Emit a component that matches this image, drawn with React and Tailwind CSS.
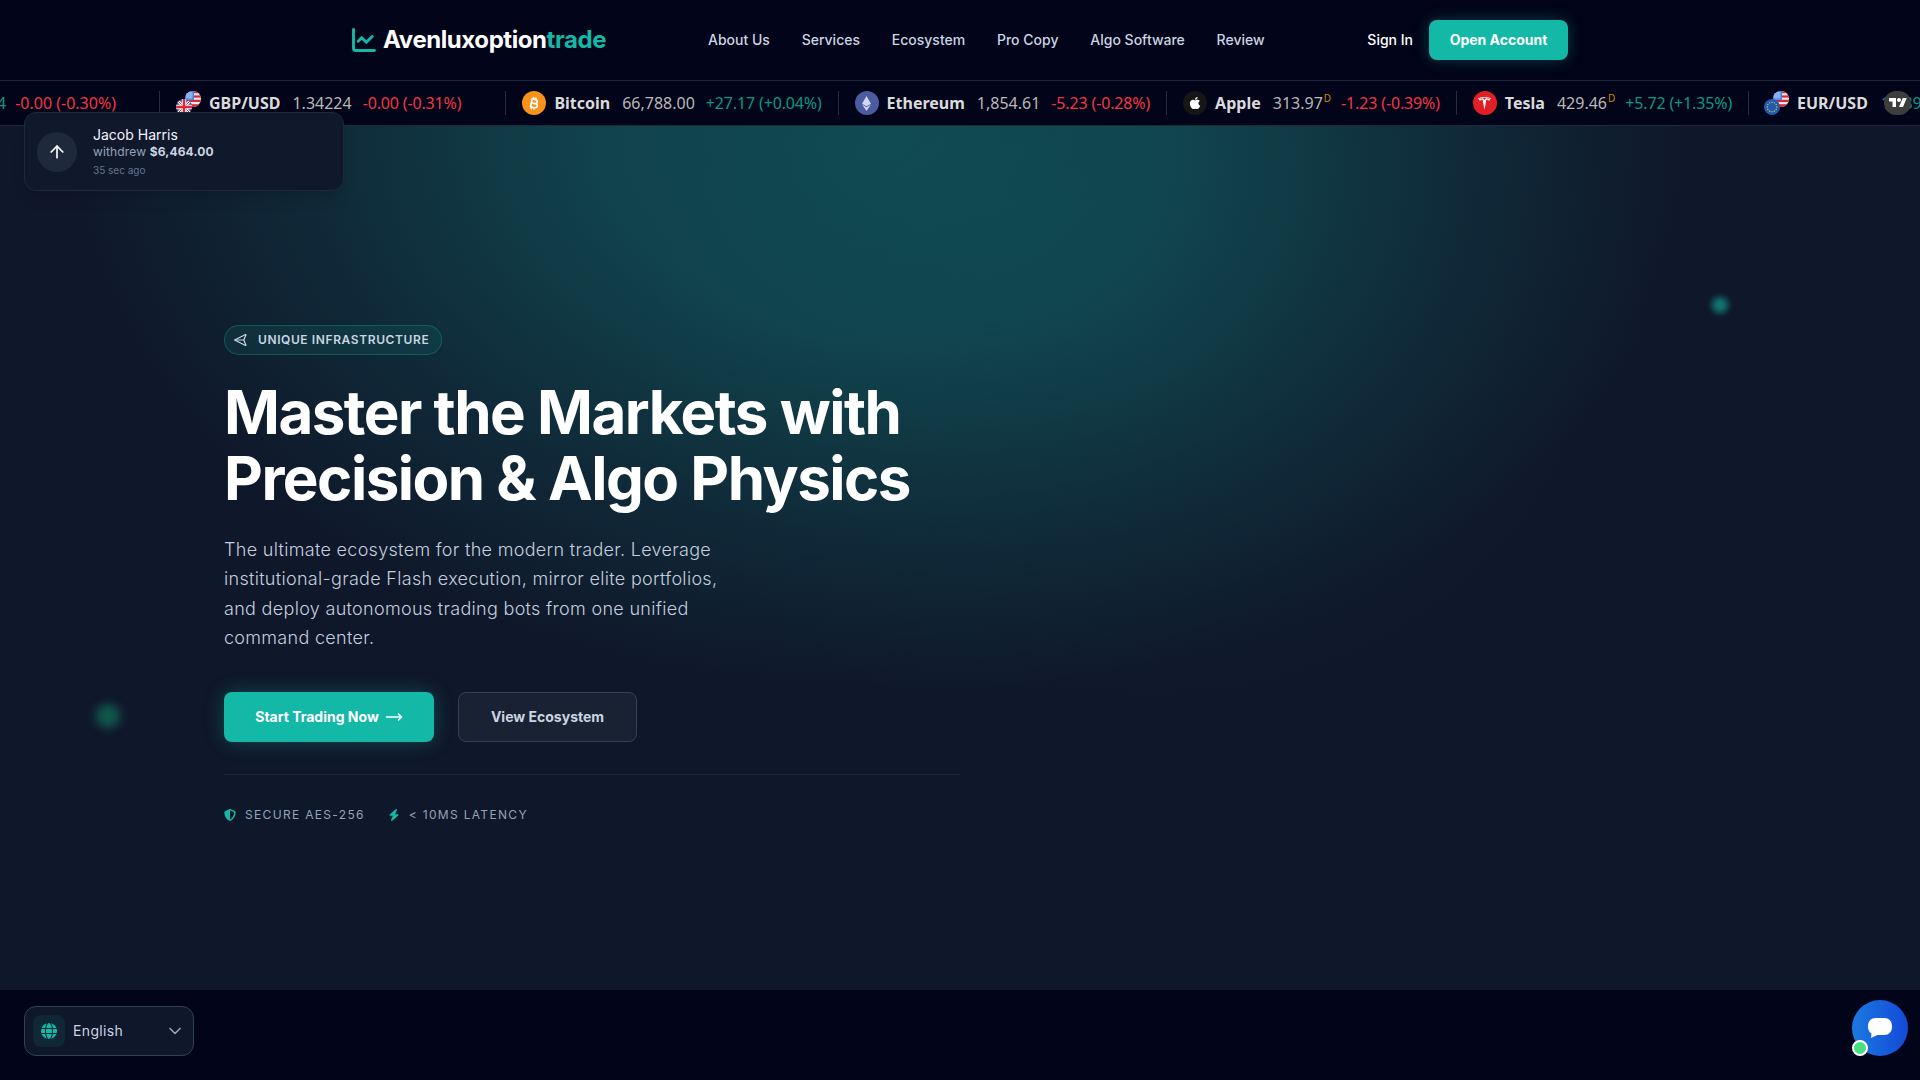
import React from "react";
import { ChartLine, ArrowUp, ChevronDown, MoveRight, Send } from "lucide-react";
import { FaShieldHalved, FaBolt, FaGlobe, FaApple, FaEthereum, FaBitcoinSign } from "react-icons/fa6";
import { SiTesla } from "react-icons/si";

const Sep = () => <div className="w-px h-6 bg-[#2a2e39] shrink-0" />;

const Green = "text-[#089981]";
const Red = "text-[#f23645]";

function UsFlag() {
  return (
    <svg viewBox="0 0 16 16" className="absolute right-0 top-0 w-4 h-4">
      <clipPath id="usc"><circle cx="8" cy="8" r="8" /></clipPath>
      <g clipPath="url(#usc)">
        <rect width="16" height="16" fill="#e8e8e8" />
        <rect y="0" width="16" height="2.2" fill="#d8283a" />
        <rect y="4.4" width="16" height="2.2" fill="#d8283a" />
        <rect y="8.8" width="16" height="2.2" fill="#d8283a" />
        <rect y="13.2" width="16" height="2.8" fill="#d8283a" />
        <rect width="9" height="8.8" fill="#3b82e6" />
        <path d="M1 2h7M1 4h7M1 6h7M2 1v7M4 1v7M6 1v7" stroke="#cfe2ff" strokeWidth=".6" />
      </g>
    </svg>
  );
}

function GbFlag() {
  return (
    <svg viewBox="0 0 16 16" className="absolute left-0 bottom-0 w-4 h-4">
      <clipPath id="gbc"><circle cx="8" cy="8" r="8" /></clipPath>
      <g clipPath="url(#gbc)">
        <rect width="16" height="16" fill="#2f4a9a" />
        <path d="M0 0L16 16M16 0L0 16" stroke="#f2f2f2" strokeWidth="3" />
        <path d="M0 0L16 16M16 0L0 16" stroke="#d8283a" strokeWidth="1" />
        <path d="M8 0V16M0 8H16" stroke="#f2f2f2" strokeWidth="4.5" />
        <path d="M8 0V16M0 8H16" stroke="#d8283a" strokeWidth="2.4" />
      </g>
    </svg>
  );
}

function EuFlag() {
  const stars = [0, 1, 2, 3, 4, 5, 6, 7, 8, 9, 10, 11];
  return (
    <svg viewBox="0 0 16 16" className="absolute left-0 bottom-0 w-4 h-4">
      <circle cx="8" cy="8" r="8" fill="#1f5bb5" />
      {stars.map((i) => (
        <circle
          key={i}
          cx={8 + 4.8 * Math.cos((i * Math.PI) / 6)}
          cy={8 + 4.8 * Math.sin((i * Math.PI) / 6)}
          r=".7"
          fill="#f5c518"
        />
      ))}
    </svg>
  );
}

const Pair = ({ low }) => (
  <div className="relative w-[25px] h-6 shrink-0">
    <UsFlag />
    {low}
  </div>
);

const Round = ({ bg, children }) => (
  <div className={`w-6 h-6 rounded-full flex items-center justify-center shrink-0 ${bg}`}>{children}</div>
);

function Item({ icon, name, price, d, change, up, fx }) {
  return (
    <>
      <div className={`flex items-center shrink-0 pl-4 ${fx ? "pr-[44px]" : "pr-4"}`}>
        {icon}
        <span className="ml-2 font-bold text-[#dbdbdb]">{name}</span>
        <span className="ml-[12px] text-[#b8b8b8] flex items-start">
          {price}
          {d && <span className="text-[10px] leading-[14px] text-[#d1850f] ml-[1px]">D</span>}
        </span>
        <span className={`tracking-[-0.15px] ${d ? "ml-[10px]" : "ml-[11px]"} ${up ? Green : Red}`}>{change}</span>
      </div>
      <Sep />
    </>
  );
}

function Ticker() {
  return (
    <div className="relative h-[45px] bg-[#020419] border-b border-[#1e293b] overflow-hidden">
      <div className="flex items-center h-[44px] -ml-[8px] font-['Noto_Sans',sans-serif] text-base whitespace-nowrap">
        <div className="shrink-0 w-[167px] flex items-center justify-end pr-[43px]">
          <span className="text-[#089981] mr-[9px]">4</span>
          <span className={Red}>-0.00 (-0.30%)</span>
        </div>
        <Sep />
        <Item fx icon={<Pair low={<GbFlag />} />} name="GBP/USD" price="1.34224" change="-0.00 (-0.31%)" />
        <Item
          icon={<Round bg="bg-[#f7931a]"><FaBitcoinSign className="w-[13px] h-[13px] text-white rotate-12" /></Round>}
          name="Bitcoin"
          price="66,788.00"
          change="+27.17 (+0.04%)"
          up
        />
        <Item
          icon={<Round bg="bg-[#4c5ba0]"><FaEthereum className="w-[15px] h-[15px] text-[#cfd8f5]" /></Round>}
          name="Ethereum"
          price="1,854.61"
          change="-5.23 (-0.28%)"
        />
        <Item
          icon={<Round bg="bg-[#161616]"><FaApple className="w-[14px] h-[14px] text-white" /></Round>}
          name="Apple"
          price="313.97"
          d
          change="-1.23 (-0.39%)"
        />
        <Item
          icon={<Round bg="bg-[#e31f26]"><SiTesla className="w-[13px] h-[13px] text-white" /></Round>}
          name="Tesla"
          price="429.46"
          d
          change="+5.72 (+1.35%)"
          up
        />
        <div className="flex items-center shrink-0 pl-[15px] pr-4">
          <Pair low={<EuFlag />} />
          <span className="ml-2 font-bold text-[#dbdbdb]">EUR/USD</span>
          <span className="ml-[13px] text-[#089981]">1.1894</span>
        </div>
      </div>
      <div className="absolute left-[1884px] top-[10px] w-[27px] h-6 rounded-full bg-[#3d3d3d] flex items-center justify-center">
        <svg viewBox="0 0 36 28" className="w-[18px] h-[14px]" fill="#fff">
          <path d="M14 22H7V11H0V4h14v18zM28 22h-8l7.500-18h8L28 22z" />
          <circle cx="20" cy="8" r="4" />
        </svg>
      </div>
    </div>
  );
}

function Nav() {
  const links = ["About Us", "Services", "Ecosystem", "Pro Copy", "Algo Software", "Review"];
  return (
    <nav className="h-[81px] bg-[#020419] border-b border-[#1e293b]">
      <div className="mx-auto w-[1280px] pl-[30px] pr-8 h-[80px] flex items-center">
        <div className="flex items-center gap-[5px] w-[358px]">
          <ChartLine className="w-7 h-7 text-[#14b8a6]" strokeWidth={2.5} />
          <span className="text-2xl font-bold tracking-[-0.018em] text-white">
            Avenluxoption<span className="text-[#14b8a6]">trade</span>
          </span>
        </div>
        <div className="flex items-center gap-[31.8px] text-sm font-medium text-[#cbd5e1]">
          {links.map((l) => (
            <span key={l}>{l}</span>
          ))}
        </div>
        <div className="ml-auto flex items-center gap-4">
          <span className="text-sm font-medium text-white">Sign In</span>
          <button className="h-10 w-[139px] rounded-lg bg-[#14b8a6] text-sm font-bold text-white shadow-[0_0_15px_rgba(20,184,166,0.3)]">
            Open Account
          </button>
        </div>
      </div>
    </nav>
  );
}

function Hero() {
  return (
    <section className="relative h-[864px] bg-[#0f172a] overflow-hidden">
      <div className="absolute inset-0 bg-[radial-gradient(ellipse_520px_420px_at_1150px_220px,rgba(20,184,166,0.05),rgba(20,184,166,0)_100%),radial-gradient(ellipse_820px_560px_at_880px_10px,rgba(20,184,166,0.31)_0%,rgba(20,184,166,0.27)_35%,rgba(20,184,166,0.11)_70%,rgba(20,184,166,0)_100%)]" />
      <div className="absolute left-[1712px] top-[171px] w-4 h-4 rounded-full bg-[#14b8a6] opacity-60 blur-[3px]" />
      <div className="absolute left-[96px] top-[578px] w-6 h-6 rounded-full bg-[#10b981] opacity-40 blur-[5px]" />
      <div className="relative pl-[224px] pt-[199px] w-[960px]">
        <div className="inline-flex items-center h-[30px] w-[218px] pl-[11px] pr-2 gap-[8px] rounded-full border border-[#14b8a6]/30 bg-[#14b8a6]/10 text-xs font-semibold tracking-[0.05em] text-[#cbd5e1]">
          <Send className="w-[14px] h-[14px] -rotate-[135deg]" />
          UNIQUE INFRASTRUCTURE
        </div>
        <h1 className="mt-6 text-[60px] leading-[66px] font-bold tracking-[-0.025em] text-white">
          Master the Markets with
          <br />
          Precision &amp; Algo Physics
        </h1>
        <p className="mt-6 max-w-[512px] text-lg font-light tracking-[0.017em] leading-[29.25px] text-[#c4cfdd]">
          The ultimate ecosystem for the modern trader. Leverage institutional-grade Flash execution, mirror elite portfolios, and deploy autonomous trading bots from one unified command center.
        </p>
        <div className="mt-10 flex gap-6">
          <button className="h-[50px] w-[210px] rounded-lg bg-[#14b8a6] text-sm font-bold text-white flex items-center justify-center gap-[6px] shadow-[0_0_20px_rgba(20,184,166,0.3)]">
            Start Trading Now
            <MoveRight className="w-[18px] h-[18px]" />
          </button>
          <button className="h-[50px] w-[179px] rounded-lg bg-[#1e293b]/60 border border-[#334155] text-sm font-bold text-[#cbd5e1]">
            View Ecosystem
          </button>
        </div>
        <div className="mt-8 pt-[32px] border-t border-[#1e293b] flex items-center gap-[23px] text-xs font-normal tracking-[0.11em] text-[#94a3b8]">
          <span className="flex items-center gap-[9px]">
            <FaShieldHalved className="w-3 h-3 text-[#14b8a6]" />
            SECURE AES-256
          </span>
          <span className="flex items-center gap-[9px]">
            <FaBolt className="w-3 h-3 text-[#14b8a6]" />
            &lt; 10MS LATENCY
          </span>
        </div>
      </div>
    </section>
  );
}

export default function App() {
  return (
    <div className="relative w-[1920px] h-[1080px] overflow-hidden bg-[#020419] font-['Inter',sans-serif]">
      <Nav />
      <Ticker />
      <Hero />

      <div className="absolute left-6 top-[112px] w-[320px] h-[79px] rounded-xl border border-[#1e293b] bg-[#10192c] flex items-center px-3 gap-4 shadow-lg">
        <div className="w-10 h-10 rounded-full bg-[#1e293b] flex items-center justify-center">
          <ArrowUp className="w-5 h-5 text-white" />
        </div>
        <div className="flex flex-col pt-px">
          <span className="text-sm leading-[18px] font-normal text-[#f1f5f9]">Jacob Harris</span>
          <span className="text-xs leading-[16px] text-[#94a3b8] tracking-[0.012em]">
            withdrew <span className="font-bold text-[#cbd5e1]">$6,464.00</span>
          </span>
          <span className="mt-[2px] text-[10px] leading-[16px] text-[#64748b]">35 sec ago</span>
        </div>
      </div>

      <div className="absolute left-6 top-[1006px] w-[170px] h-[50px] rounded-xl border border-[#334155] bg-[#0f172a] flex items-center pl-2 pr-2">
        <div className="w-8 h-8 rounded-lg bg-[#14b8a6]/10 flex items-center justify-center">
          <FaGlobe className="w-4 h-4 text-[#14b8a6]" />
        </div>
        <span className="ml-2 text-sm font-normal tracking-[0.025em] text-[#cbd5e1]">English</span>
        <ChevronDown className="ml-auto w-5 h-5 text-[#94a3b8]" />
      </div>

      <div className="absolute left-[1852px] top-[1000px] w-14 h-14 rounded-full bg-[linear-gradient(90deg,#1a7ae0,#1449d8)] flex items-center justify-center">
        <svg viewBox="0 0 24 20" className="w-6 h-[20px]" fill="#fff">
          <path d="M8 0h8c5 0 8 3 8 8.500S21 17 16 17H9.500L3 20l.5-4.500C1 14 0 11.500 0 8.500 0 3 3 0 8 0z" />
        </svg>
      </div>
      <div className="absolute left-[1852px] top-[1040px] w-4 h-4 rounded-full bg-[#4ade80] border-2 border-white" />
    </div>
  );
}
